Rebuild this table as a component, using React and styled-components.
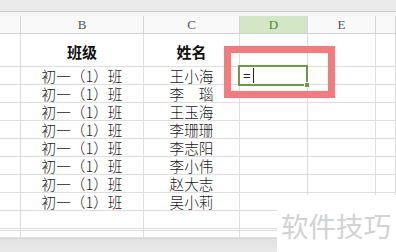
import React from 'react';
import styled, { createGlobalStyle } from 'styled-components';

const GlobalStyle = createGlobalStyle`
  html, body {
    margin: 0;
    padding: 0;
    background: #ffffff;
  }
  body {
    width: 396px;
    height: 252px;
    overflow: hidden;
  }
`;

const columns = [
  { key: 'B', width: 123 },
  { key: 'C', width: 96 },
  { key: 'D', width: 68, active: true },
  { key: 'E', width: 68 },
  { key: '', width: 20 },
];

const classes = Array(8).fill('初一（1）班');
const names = ['王小海', '李\u3000瑙', '王玉海', '李珊珊', '李志阳', '李小伟', '赵大志', '吴小莉'];

export default function App() {
  return (
    <>
      <GlobalStyle />
      <Page>
        <TopBar />
        <TopGap />
        <Sheet>
          <HeadCell />
          {columns.map((c, i) => (
            <HeadCell key={i} active={c.active}>{c.key}</HeadCell>
          ))}

          <RowNum tall />
          <Cell tall><Title>班级</Title></Cell>
          <Cell tall><Title>姓名</Title></Cell>
          <Cell tall />
          <Cell tall />
          <Cell tall />

          {classes.map((cls, i) => (
            <React.Fragment key={i}>
              <RowNum />
              <Cell><Text>{cls}</Text></Cell>
              <Cell><Text>{names[i]}</Text></Cell>
              {i === 0 ? (
                <EditCell>
                  <EditText>=</EditText>
                  <Caret />
                  <Selection>
                    <Handle />
                  </Selection>
                </EditCell>
              ) : (
                <Cell />
              )}
              <Cell />
              <Cell />
            </React.Fragment>
          ))}

          {[18, 2, 7].map((h, r) => (
            <React.Fragment key={'e' + r}>
              <RowNum h={h} />
              <Cell h={h} />
              <Cell h={h} />
              <Cell h={h} />
              <Cell h={h} />
              <Cell h={h} />
            </React.Fragment>
          ))}
        </Sheet>
        <BottomBar />

        <Highlight />
        <Watermark>软件技巧</Watermark>
      </Page>
    </>
  );
}

const Page = styled.div`
  position: relative;
  width: 396px;
  height: 252px;
  display: flex;
  flex-direction: column;
  overflow: hidden;
  font-family: "Noto Sans CJK SC", "Noto Sans", sans-serif;
  color: #222;
`;

const TopBar = styled.div`
  height: 11px;
  background: #ebebeb;
  border-bottom: 1px solid #c9c9c9;
`;

const TopGap = styled.div`
  height: 4px;
  background: #f3f3f3;
`;

const Sheet = styled.div`
  display: grid;
  grid-template-columns: 21px ${columns.map(c => c.width + 'px').join(' ')};
`;

const HeadCell = styled.div`
  height: 18px;
  box-sizing: border-box;
  border-right: 1px solid #d6d6d6;
  border-bottom: 1px solid #d0d0d0;
  background: ${p => (p.active ? '#d4e7c4' : '#f9f9f9')};
  color: ${p => (p.active ? '#4d8a2c' : '#555')};
  font-family: "Liberation Serif", serif;
  font-size: 13px;
  display: flex;
  align-items: center;
  justify-content: center;
  padding-top: 1px;
`;

const Cell = styled.div`
  height: ${p => (p.tall ? 33 : p.h || 18)}px;
  box-sizing: border-box;
  border-right: 1px solid #dedede;
  border-bottom: 1px solid #dedede;
  display: flex;
  align-items: flex-end;
  justify-content: center;
  white-space: nowrap;
`;

const RowNum = styled(Cell)`
  background: #ffffff;
`;

const Text = styled.span`
  font-size: 14.6px;
  line-height: 16px;
  font-weight: 300;
  color: #1a1a1a;
`;

const Title = styled.span`
  font-weight: 700;
  font-size: 15px;
  line-height: 20px;
  align-self: center;
  padding-top: 3px;
  color: #111;
`;

const EditCell = styled(Cell)`
  position: relative;
  justify-content: flex-start;
  align-items: center;
  padding-left: 3px;
`;

const EditText = styled.span`
  font-family: "Liberation Sans", sans-serif;
  font-size: 13px;
  line-height: 14px;
  color: #222;
`;

const Caret = styled.span`
  width: 1px;
  height: 15px;
  margin-left: 2px;
  background: #222;
`;

const Selection = styled.div`
  position: absolute;
  left: -2px;
  top: -2px;
  right: -1px;
  bottom: -2px;
  border: 2px solid #6c9a48;
  pointer-events: none;
`;

const Handle = styled.div`
  position: absolute;
  right: -4px;
  bottom: -4px;
  width: 4px;
  height: 4px;
  background: #6c9a48;
  border: 1px solid #fff;
`;

const BottomBar = styled.div`
  flex: 1;
  width: 277px;
  background: linear-gradient(#e2e2e2, #e9e9e9);
  border-top: 1px solid #d8d8d8;
`;

const Highlight = styled.div`
  position: absolute;
  left: 224px;
  top: 46px;
  width: 111px;
  height: 52px;
  box-sizing: border-box;
  border: 7px solid #f27c7c;
`;

const Watermark = styled.div`
  position: absolute;
  left: 277px;
  top: 195px;
  right: 0;
  bottom: 0;
  background: #ffffff;
  color: #d2d2d2;
  font-family: "Noto Sans CJK SC", sans-serif;
  font-size: 27.5px;
  line-height: 1;
  padding: 17px 0 0 4px;
  box-sizing: border-box;
  white-space: nowrap;
`;
